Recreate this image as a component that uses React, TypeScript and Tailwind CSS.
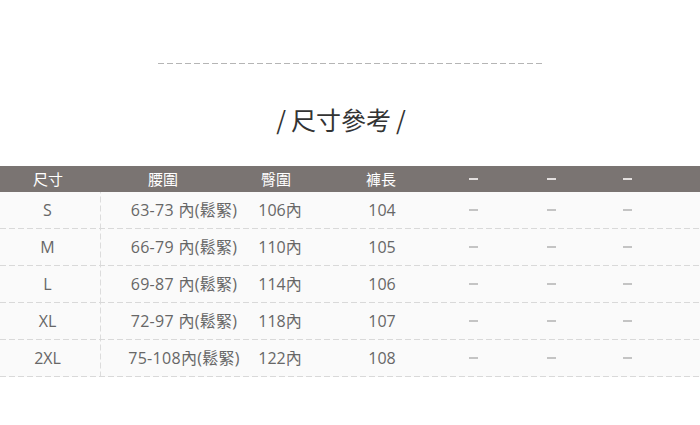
const font = '[font-family:"Open_Sans","Noto_Sans_CJK_TC",sans-serif]';

type Row = { size: string; waist: string; hip: string; length: string };

const rows: Row[] = [
  { size: 'S', waist: '63-73 內(鬆緊)', hip: '106內', length: '104' },
  { size: 'M', waist: '66-79 內(鬆緊)', hip: '110內', length: '105' },
  { size: 'L', waist: '69-87 內(鬆緊)', hip: '114內', length: '106' },
  { size: 'XL', waist: '72-97 內(鬆緊)', hip: '118內', length: '107' },
  { size: '2XL', waist: '75-108內(鬆緊)', hip: '122內', length: '108' },
];

const cols = 'grid grid-cols-[101px_124px_102px_108px_76px_80px_72px_1fr]';

function Dash({ light }: { light?: boolean }) {
  return <span className={`block h-[2px] w-[9px] ${light ? 'bg-[#e4e0df]' : 'bg-[#c4c4c4]'}`} />;
}

export default function App() {
  return (
    <div className={`w-[700px] h-[425px] bg-white ${font} overflow-hidden`}>
      <div className="pt-[63px] flex justify-center">
        <div className="h-px w-[384px] bg-[linear-gradient(to_right,#b5b5b5_6px,transparent_6px)] bg-[length:9px_1px] bg-repeat-x" />
      </div>

      <h1 className="mt-[40px] h-8 flex items-center justify-center gap-[5px] pr-[18px] text-[25px] text-[#333] [font-family:'Noto_Sans_CJK_TC','Noto_Sans',sans-serif]">
        <span>/</span>
        <span>尺寸參考</span>
        <span>/</span>
      </h1>

      <section className="mt-[30px]">
        <div className={`${cols} h-[26px] items-center bg-[#7a7472] text-white text-[15px] [font-family:'Noto_Sans_CJK_TC',sans-serif]`}>
          <div className="flex justify-center pr-[5px]">尺寸</div>
          <div className="flex justify-center">腰圍</div>
          <div className="flex justify-center">臀圍</div>
          <div className="flex justify-center">褲長</div>
          <div className="flex justify-center"><Dash light /></div>
          <div className="flex justify-center"><Dash light /></div>
          <div className="flex justify-center"><Dash light /></div>
          <div />
        </div>

        <div className="bg-[#fafafa] text-[16px] text-[#676767]">
          {rows.map(r => (
            <div key={r.size}>
              <div className={`${cols} h-[36px] items-center`}>
                <div className="h-full flex items-center justify-center pr-[6px] bg-[linear-gradient(to_bottom,#dcdcdc_6px,transparent_6px)] bg-[length:1px_9px] bg-right bg-repeat-y">{r.size}</div>
                <div className="flex justify-center pl-[42px] whitespace-nowrap tracking-[0.3px]">{r.waist}</div>
                <div className="flex justify-center pl-[8px] whitespace-nowrap">{r.hip}</div>
                <div className="flex justify-center pl-[2px]">{r.length}</div>
                <div className="flex justify-center"><Dash /></div>
                <div className="flex justify-center"><Dash /></div>
                <div className="flex justify-center"><Dash /></div>
                <div />
              </div>
              <div className="h-px bg-[linear-gradient(to_right,#d9d9d9_6px,transparent_6px)] bg-[length:9px_1px] bg-repeat-x" />
            </div>
          ))}
        </div>
      </section>
    </div>
  );
}
